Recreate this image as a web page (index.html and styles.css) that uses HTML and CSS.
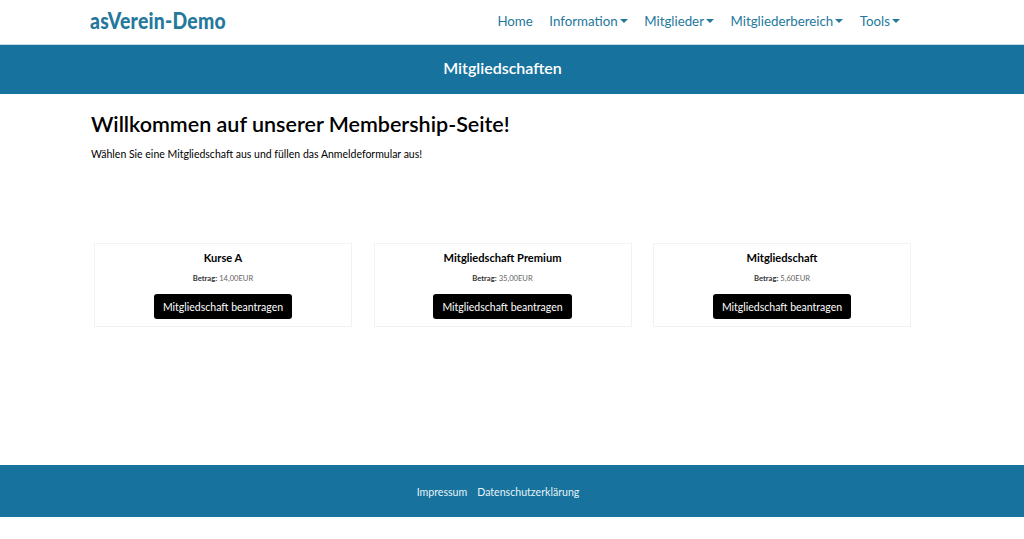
FILE: index.html
```html
<!DOCTYPE html>
<html lang="de">
<head>
    <meta charset="UTF-8">
    <meta name="viewport" content="width=device-width, initial-scale=1.0">
    <title>Mitgliedschaften</title>
    <link rel="stylesheet" href="styles.css">
</head>
<body>
    <header class="site-header">
        <a href="#" class="logo"><span class="logo-text">asVerein-Demo</span></a>
        <nav class="main-nav">
            <a href="#" class="nav-link">Home</a>
            <a href="#" class="nav-link caret">Information</a>
            <a href="#" class="nav-link caret">Mitglieder</a>
            <a href="#" class="nav-link caret">Mitgliederbereich</a>
            <a href="#" class="nav-link caret">Tools</a>
        </nav>
    </header>

    <div class="banner">Mitgliedschaften</div>

    <main class="content">
        <h1>Willkommen auf unserer Membership-Seite!</h1>
        <p class="intro">Wählen Sie eine Mitgliedschaft aus und füllen das Anmeldeformular aus!</p>

        <div class="plans">
            <div class="plan-card">
                <h2>Kurse A</h2>
                <p class="price"><strong>Betrag:</strong> 14,00EUR</p>
                <a href="#" class="button">Mitgliedschaft beantragen</a>
            </div>
            <div class="plan-card">
                <h2>Mitgliedschaft Premium</h2>
                <p class="price"><strong>Betrag:</strong> 35,00EUR</p>
                <a href="#" class="button">Mitgliedschaft beantragen</a>
            </div>
            <div class="plan-card">
                <h2>Mitgliedschaft</h2>
                <p class="price"><strong>Betrag:</strong> 5,60EUR</p>
                <a href="#" class="button">Mitgliedschaft beantragen</a>
            </div>
        </div>
    </main>

    <footer class="site-footer">
        <a href="#">Impressum</a>
        <a href="#">Datenschutzerklärung</a>
    </footer>
</body>
</html>
```

FILE: styles.css
```css
body {
    font-family: 'Lato', 'Open Sans', sans-serif;
    color: #000;
    background-color: #fff;
    margin: 0;
}
a {
    text-decoration: none;
}
.site-header {
    display: flex;
    justify-content: space-between;
    align-items: center;
    height: 42px;
    padding: 0 124px 2px 90px;
    border-bottom: 1px solid #c5dbe6;
}
.logo {
    display: block;
    width: 137px;
    margin-bottom: 2px;
}
.logo-text {
    display: inline-block;
    font-family: 'Lato', sans-serif;
    font-weight: 900;
    font-size: 23px;
    letter-spacing: 0.3px;
    color: #24789c;
    white-space: nowrap;
    transform: scaleX(0.84);
    transform-origin: left center;
}
.main-nav {
    display: flex;
    gap: 16.5px;
}
.nav-link {
    color: #24789c;
    font-size: 13.3px;
}
.caret::after {
    content: "";
    display: inline-block;
    margin-left: 2px;
    vertical-align: 3px;
    border-top: 4px solid;
    border-left: 4px solid transparent;
    border-right: 4px solid transparent;
}
.banner {
    background-color: #17739e;
    color: #fff;
    height: 49px;
    line-height: 46px;
    padding-right: 19px;
    text-align: center;
    font-size: 16px;
    font-weight: 600;
}
.content {
    padding: 0 113px 0 91px;
    height: 371px;
}
h1 {
    font-size: 21.5px;
    font-weight: 600;
    line-height: 30px;
    margin: 0;
    padding-top: 15px;
}
.intro {
    font-size: 10.5px;
    line-height: 16px;
    margin: 7px 0 0;
}
.plans {
    display: grid;
    grid-template-columns: repeat(3, 258px);
    gap: 21.5px;
    margin: 81px 0 0 3px;
}
.plan-card {
    height: 84px;
    box-sizing: border-box;
    border: 1px solid #f2f2f2;
    text-align: center;
    padding-top: 7px;
}
.plan-card h2 {
    font-size: 11.1px;
    font-weight: 700;
    line-height: 14px;
    margin: 0;
}
.price {
    font-size: 7.6px;
    line-height: 10px;
    color: #666;
    margin: 8px 0 0;
}
.price strong {
    color: #333;
}
.button {
    display: inline-block;
    background-color: #000;
    color: #fff;
    font-size: 10.5px;
    line-height: 24px;
    padding: 1px 9px 0;
    border-radius: 3px;
    margin-top: 11px;
}
.site-footer {
    display: flex;
    justify-content: center;
    align-items: center;
    gap: 10px;
    height: 51px;
    padding: 1px 28px 0 0;
    background-color: #17739e;
    font-size: 10.6px;
}
.site-footer a {
    color: #e6f2f7;
}
```
